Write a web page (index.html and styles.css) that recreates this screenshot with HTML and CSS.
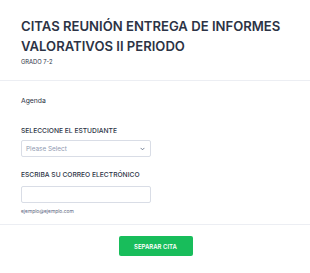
FILE: index.html
```html
<!DOCTYPE html>
<html lang="es">
<head>
<meta charset="utf-8">
<link rel="stylesheet" href="styles.css">
</head>
<body>
<div class="form">
  <header class="header">
    <h1 class="title">CITAS REUNIÓN ENTREGA DE INFORMES VALORATIVOS II PERIODO</h1>
    <div class="subtitle">GRADO 7-2</div>
  </header>
  <section class="fields">
    <div class="text-block">Agenda</div>
    <div class="field field-select">
      <label class="label">SELECCIONE EL ESTUDIANTE</label>
      <div class="select">
        <span class="placeholder">Please Select</span>
        <svg class="chevron" width="5" height="4" viewBox="0 0 5 4"><path d="M0.6 0.9 L2.5 2.8 L4.4 0.9" fill="none" stroke="#57647e" stroke-width="0.8"/></svg>
      </div>
    </div>
    <div class="field field-email">
      <label class="label">ESCRIBA SU CORREO ELECTRÓNICO</label>
      <div class="input"></div>
      <div class="sublabel">ejemplo@ejemplo.com</div>
    </div>
  </section>
  <footer class="footer">
    <button class="submit">SEPARAR CITA</button>
  </footer>
</div>
</body>
</html>
```

FILE: styles.css
```css
* { box-sizing: border-box; }
html, body { margin: 0; padding: 0; background: #fff; }
body { font-family: Inter, "Noto Sans", sans-serif; color: #2c3345; }

.header {
  padding: 16px 21px 0;
  height: 81px;
  border-bottom: 1px solid #eceef3;
}
.title {
  margin: 0;
  font-family: Inter, sans-serif;
  font-size: 13.1px;
  line-height: 20px;
  font-weight: 600;
  color: #2c3345;
  width: 285px;
}
.subtitle {
  margin-top: 2px;
  font-size: 5.8px;
  line-height: 8px;
  color: #2c3345;
}

.fields {
  padding: 15px 21px 0;
  height: 144px;
  border-bottom: 1px solid #eceef3;
}
.text-block {
  font-size: 6.8px;
  line-height: 10px;
}
.field-select { margin-top: 20px; }
.field-email { margin-top: 13px; }
.label {
  display: block;
  font-size: 6.7px;
  line-height: 10px;
  font-weight: 500;
}
.select, .input {
  width: 130px;
  height: 17px;
  border: 1px solid #d9dde6;
  border-radius: 2px;
  background: #fff;
}
.select {
  margin-top: 4px;
  display: flex;
  align-items: center;
  justify-content: space-between;
  padding: 0 5px 0 4px;
}
.placeholder {
  font-size: 6.4px;
  color: #8f99b0;
}
.input { margin-top: 6px; }
.sublabel {
  margin-top: 4px;
  font-size: 4.9px;
  line-height: 8px;
  color: #57647e;
}

.footer {
  display: flex;
  justify-content: center;
  padding: 11px 0 0 1px;
}
.submit {
  width: 74px;
  height: 20px;
  border: 0;
  border-radius: 2px;
  background: #18bd5b;
  color: #fff;
  font-family: Inter, "Noto Sans", sans-serif;
  font-size: 6px;
  font-weight: 600;
  padding: 0;
}
```
